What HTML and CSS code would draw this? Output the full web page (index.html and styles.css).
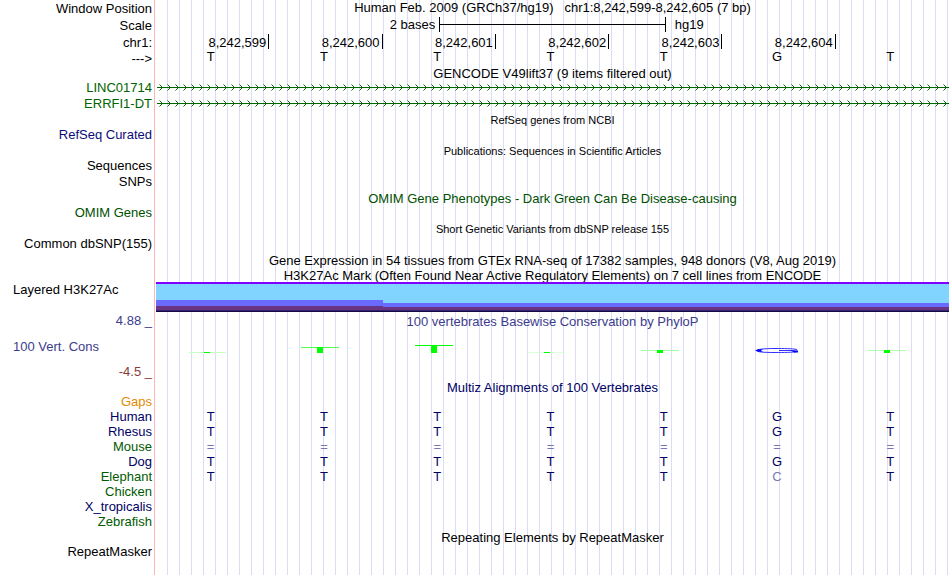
FILE: index.html
```html
<!DOCTYPE html>
<html lang="en">
  <head>
    <meta charset="utf-8">
    <title>Human chr1:8,242,599-8,242,605</title>
    <link rel="stylesheet" href="styles.css">
  </head>
  <body>
    <main class="browser">
      <!-- Position, scale and base ruler -->
      <section>
        <div class="row ruler-row">
          <div class="label">Window Position</div>
          <h1 class="position">Human Feb. 2009 (GRCh37/hg19)   chr1:8,242,599-8,242,605 (7 bp)</h1>
        </div>
        <div class="row ruler-row">
          <div class="label">Scale</div>
          <div class="scale">
            <span class="scale-length">2 bases</span>
            <span class="scale-bar"></span>
            <span class="scale-db">hg19</span>
          </div>
        </div>
        <div class="row ruler-row">
          <div class="label">chr1:</div>
          <div class="ticks">
            <span>8,242,599</span>
            <span>8,242,600</span>
            <span>8,242,601</span>
            <span>8,242,602</span>
            <span>8,242,603</span>
            <span>8,242,604</span>
          </div>
        </div>
        <div class="row base-row">
          <div class="label">---&gt;</div>
          <div class="bases">
            <span>T</span><span>T</span><span>T</span><span>T</span><span>T</span><span>G</span><span>T</span>
          </div>
        </div>
      </section>

      <!-- Gene tracks -->
      <section>
        <h2 class="title">GENCODE V49lift37 (9 items filtered out)</h2>
        <div class="row item">
          <div class="label gene">LINC01714</div>
          <svg class="transcript" aria-hidden="true">
            <defs>
              <pattern id="arrows" width="8" height="16" patternUnits="userSpaceOnUse">
                <path d="M3.5 4.5l3 3l-3 3" fill="none" stroke="#006400"/>
              </pattern>
            </defs>
            <rect x="1" y="7" width="100%" height="1" fill="#006400"/>
            <rect width="100%" height="16" fill="url(#arrows)"/>
          </svg>
        </div>
        <div class="row item">
          <div class="label gene">ERRFI1-DT</div>
          <svg class="transcript" aria-hidden="true">
            <rect x="1" y="7" width="100%" height="1" fill="#006400"/>
            <rect width="100%" height="16" fill="url(#arrows)"/>
          </svg>
        </div>
      </section>
      <section>
        <h2 class="title small">RefSeq genes from NCBI</h2>
        <div class="row item"><div class="label refseq">RefSeq Curated</div></div>
      </section>
      <section>
        <h2 class="title small">Publications: Sequences in Scientific Articles</h2>
        <div class="row item"><div class="label">Sequences</div></div>
        <div class="row item"><div class="label">SNPs</div></div>
      </section>
      <section>
        <h2 class="title omim">OMIM Gene Phenotypes - Dark Green Can Be Disease-causing</h2>
        <div class="row item"><div class="label omim">OMIM Genes</div></div>
      </section>
      <section>
        <h2 class="title small">Short Genetic Variants from dbSNP release 155</h2>
        <div class="row item"><div class="label">Common dbSNP(155)</div></div>
      </section>
      <section>
        <h2 class="title">Gene Expression in 54 tissues from GTEx RNA-seq of 17382 samples, 948 donors (V8, Aug 2019)</h2>
      </section>

      <!-- H3K27Ac overlay -->
      <section>
        <h2 class="title">H3K27Ac Mark (Often Found Near Active Regulatory Elements) on 7 cell lines from ENCODE</h2>
        <div class="row">
          <div class="label left">Layered H3K27Ac</div>
          <div class="signal">
            <div class="signal-high"></div>
            <div class="signal-low"></div>
          </div>
        </div>
      </section>

      <!-- Conservation -->
      <section class="row cons">
        <div class="cons-labels">
          <div class="label phylop">4.88 _</div>
          <div class="label phylop left">100 Vert. Cons</div>
          <div class="label negative">-4.5 _</div>
        </div>
        <div>
          <h2 class="cons-title phylop">100 vertebrates Basewise Conservation by PhyloP</h2>
          <div class="logo">
            <svg width="38" height="8"><path d="M1 7h37v1H1z" fill="#c8ffc8"/><path d="M16 7h6v1h-6z" fill="#00ff00"/></svg>
            <svg width="38" height="8"><path d="M0 2h38v1H0z" fill="#50ff50"/><path d="M16 2h6v6h-6z" fill="#00ff00"/></svg>
            <svg width="38" height="8"><path d="M0 0h38v1H0z" fill="#00ff00"/><path d="M16 0h6v8h-6z" fill="#00ff00"/></svg>
            <svg width="38" height="8"><path d="M0 7h37v1H0z" fill="#d8ffd8"/><path d="M16 7h6v1h-6z" fill="#00ff00"/></svg>
            <svg width="38" height="8"><path d="M0 5h38v1H0z" fill="#a0ffa0"/><path d="M16 5h6v3h-6z" fill="#00ff00"/></svg>
            <svg class="wide" width="46" height="8"><path d="M43 4.5C38 3.5 30 3.500 21 3.500C9 3.500 3 4.500 3 5.500C3 7 9 7.500 21 7.500C30 7.500 38 7.500 43 6.500M25 5.500H38L43 6.500" fill="none" stroke="#3030ff"/><path d="M1 5.500L4 4.300h5L7 5.500L9 6.700H4zM37 5.500L44 5.500V7.500H40z" fill="#0000ff"/></svg>
            <svg width="38" height="8"><path d="M0 5h38v1H0z" fill="#b0ffb0"/><path d="M16 5h6v3h-6z" fill="#00ff00"/></svg>
          </div>
        </div>
      </section>
      <section>
        <h2 class="title multiz">Multiz Alignments of 100 Vertebrates</h2>
        <table class="alignment">
          <tr><th class="gaps" scope="row">Gaps</th><td></td><td></td><td></td><td></td><td></td><td></td><td></td></tr>
          <tr><th scope="row">Human</th><td>T</td><td>T</td><td>T</td><td>T</td><td>T</td><td>G</td><td>T</td></tr>
          <tr><th scope="row">Rhesus</th><td>T</td><td>T</td><td>T</td><td>T</td><td>T</td><td>G</td><td>T</td></tr>
          <tr class="faded"><th class="alt" scope="row">Mouse</th><td>=</td><td>=</td><td>=</td><td>=</td><td>=</td><td>=</td><td>=</td></tr>
          <tr><th scope="row">Dog</th><td>T</td><td>T</td><td>T</td><td>T</td><td>T</td><td>G</td><td>T</td></tr>
          <tr><th class="alt" scope="row">Elephant</th><td>T</td><td>T</td><td>T</td><td>T</td><td>T</td><td class="mismatch">C</td><td>T</td></tr>
          <tr><th class="alt" scope="row">Chicken</th></tr>
          <tr><th scope="row">X_tropicalis</th></tr>
          <tr><th class="alt" scope="row">Zebrafish</th></tr>
        </table>
      </section>
      <section>
        <h2 class="title">Repeating Elements by RepeatMasker</h2>
        <div class="row"><div class="label">RepeatMasker</div></div>
      </section>
    </main>
  </body>
</html>
```
FILE: styles.css
```css
* {
  box-sizing: border-box;
}

body {
  margin: 0;
  background-color: #ffffff;
  color: #000000;
  font-family: "Liberation Sans", Arial, sans-serif;
  font-size: 13px;
  line-height: 15px;
}

h1, h2 {
  margin: 0;
  font-size: 13px;
  font-weight: normal;
  text-align: center;
}

/* pink divider, plain label column, then a guide line every 12px */
.browser {
  min-height: 100vh;
  padding-right: 1px;
  background-image:
    linear-gradient(#ffb4b4, #ffb4b4),
    linear-gradient(#ffffff, #ffffff),
    linear-gradient(to right, #dcdcf8 1px, transparent 1px);
  background-size: 1px 100%, 156px 100%, 12px 100%;
  background-position: 154px 0, 0 0, 167px 0;
  background-repeat: no-repeat, no-repeat, repeat-x;
}

.row {
  display: grid;
  grid-template-columns: 156px 1fr;
}

.label {
  padding-right: 4px;
  text-align: right;
}

.left {
  padding-left: 13px;
  text-align: left;
}

.title {
  height: 15px;
  margin-left: 156px;
  line-height: 17px;
}

.small {
  font-size: 11px;
}

.item {
  height: 16px;
}

/* ruler */
.ruler-row {
  height: 17px;
  line-height: 17px;
}

.position {
  line-height: 15px;
  white-space: pre;
}

.scale {
  display: grid;
  grid-template-columns: 5fr 4fr 5fr;
  line-height: 15px;
}

.scale-length {
  padding-right: 4px;
  text-align: right;
}

.scale-bar {
  height: 15px;
  border: solid #000000;
  border-width: 0 1px;
  background: linear-gradient(#000000, #000000) 0 7px / 100% 1px no-repeat;
}

.scale-db {
  padding-left: 9px;
}

.ticks, .bases, .logo {
  display: grid;
  grid-template-columns: repeat(7, 1fr);
}

.ticks span {
  height: 15px;
  padding-right: 2px;
  border-right: 1px solid #000000;
  text-align: right;
}

.base-row {
  height: 14px;
}

.bases {
  line-height: 11px;
}

.bases span {
  padding-right: 4px;
  text-align: center;
}

/* tracks */
.transcript {
  width: 100%;
  height: 16px;
}

.gene {
  color: #006400;
}

.refseq {
  color: #0c0c78;
}

.omim {
  color: #005000;
}

.signal {
  display: grid;
  grid-template-columns: 2fr 5fr;
  height: 30px;
}

.signal-high {
  background: linear-gradient(#8000ff 2px, #80d4ff 2px 18px, #6a6aff 18px 24px, #6a3580 24px 28px, #35207a 28px 29px, #150a40 29px);
}

.signal-low {
  background: linear-gradient(#8000ff 2px, #80d4ff 2px 21px, #6a6aff 21px 25px, #6a3580 25px 28px, #35207a 28px 29px, #150a40 29px);
}

.cons {
  height: 67px;
}

.cons-labels {
  display: flex;
  flex-direction: column;
  justify-content: space-between;
  padding-top: 1px;
}

.cons-title {
  padding-top: 2px;
}

.phylop {
  color: #3c3c8c;
}

.negative {
  color: #8c3c3c;
}

.logo {
  padding-top: 16px;
}

.logo svg {
  margin-left: 32px;
  shape-rendering: crispEdges;
}

.logo .wide {
  shape-rendering: auto;
}

/* alignment */
.multiz {
  color: #000064;
}

.alignment {
  width: 100%;
  table-layout: fixed;
  border-collapse: collapse;
  color: #000064;
}

.alignment th {
  width: 156px;
  padding: 0 4px 0 0;
  font-weight: normal;
  text-align: right;
}

.alignment td {
  padding: 0 4px 0 0;
  text-align: center;
}

.alignment .gaps {
  color: #e68a00;
}

.alignment .alt {
  color: #005a00;
}

.faded td, .alignment .mismatch {
  color: #7878b4;
}
```
